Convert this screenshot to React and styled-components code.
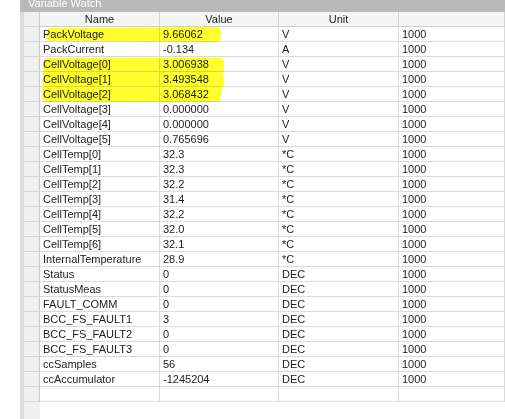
import React from "react";
import styled, { createGlobalStyle } from "styled-components";

const GlobalStyle = createGlobalStyle`
  html, body {
    margin: 0;
    padding: 0;
    background: #ffffff;
  }
  body {
    font-family: "Liberation Sans", Arial, sans-serif;
    font-size: 11px;
    color: #1c1c1c;
  }
`;

const rows = [
  ["PackVoltage", "9.66062", "V"],
  ["PackCurrent", "-0.134", "A"],
  ["CellVoltage[0]", "3.006938", "V"],
  ["CellVoltage[1]", "3.493548", "V"],
  ["CellVoltage[2]", "3.068432", "V"],
  ["CellVoltage[3]", "0.000000", "V"],
  ["CellVoltage[4]", "0.000000", "V"],
  ["CellVoltage[5]", "0.765696", "V"],
  ["CellTemp[0]", "32.3", "*C"],
  ["CellTemp[1]", "32.3", "*C"],
  ["CellTemp[2]", "32.2", "*C"],
  ["CellTemp[3]", "31.4", "*C"],
  ["CellTemp[4]", "32.2", "*C"],
  ["CellTemp[5]", "32.0", "*C"],
  ["CellTemp[6]", "32.1", "*C"],
  ["InternalTemperature", "28.9", "*C"],
  ["Status", "0", "DEC"],
  ["StatusMeas", "0", "DEC"],
  ["FAULT_COMM", "0", "DEC"],
  ["BCC_FS_FAULT1", "3", "DEC"],
  ["BCC_FS_FAULT2", "0", "DEC"],
  ["BCC_FS_FAULT3", "0", "DEC"],
  ["ccSamples", "56", "DEC"],
  ["ccAccumulator", "-1245204", "DEC"],
];

const Page = styled.div`
  position: relative;
  display: flex;
  width: 505px;
  height: 419px;
  overflow: hidden;
`;

const Margin = styled.div`
  width: 20px;
  flex: none;
`;

const Panel = styled.div`
  flex: 1;
  display: flex;
  flex-direction: column;
`;

const TitleBar = styled.div`
  height: 12px;
  flex: none;
  background: #b9b9b9;
  color: #ffffff;
  padding-left: 8px;
  font-size: 11px;
  line-height: 6px;
  overflow: hidden;
`;

const Body = styled.div`
  flex: 1;
  display: flex;
`;

const Strip = styled.div`
  width: 4px;
  flex: none;
  background: #dcdcdc;
`;

const Grid = styled.div`
  flex: 1;
  display: flex;
  flex-direction: column;
`;

const Row = styled.div`
  display: grid;
  grid-template-columns: 16px 120px 119px 120px 1fr;
  height: 15px;
  flex: none;
`;

const Cell = styled.div`
  box-sizing: border-box;
  height: 15px;
  line-height: 14px;
  padding-left: ${(p) => (p.$head ? 0 : 3)}px;
  text-align: ${(p) => (p.$head ? "center" : "left")};
  border-right: 1px solid ${(p) => (p.$head ? "#d2d2d2" : "#dadada")};
  border-bottom: 1px solid ${(p) => (p.$head ? "#cfcfcf" : "#dadada")};
  background: ${(p) => (p.$head ? "#f5f5f5" : "#ffffff")};
  white-space: nowrap;
  overflow: hidden;
`;

const RowHead = styled.div`
  box-sizing: border-box;
  height: 15px;
  background: #f0f0f0;
  border-right: 1px solid #c8c8c8;
  border-bottom: 1px solid #d4d4d4;
`;

const Filler = styled.div`
  flex: 1;
  display: grid;
  grid-template-columns: 16px 1fr;
`;

const FillerHead = styled.div`
  background: #f0f0f0;
`;

const Marker = styled.svg`
  position: absolute;
  left: 0;
  top: 0;
  pointer-events: none;
  mix-blend-mode: multiply;
`;

export default function App() {
  return (
    <>
      <GlobalStyle />
      <Page>
        <Margin />
        <Panel>
          <TitleBar>Variable Watch</TitleBar>
          <Body>
            <Strip />
            <Grid>
              <Row>
                <RowHead />
                <Cell $head>Name</Cell>
                <Cell $head>Value</Cell>
                <Cell $head>Unit</Cell>
                <Cell $head />
              </Row>
              {rows.map(([name, value, unit]) => (
                <Row key={name}>
                  <RowHead />
                  <Cell>{name}</Cell>
                  <Cell>{value}</Cell>
                  <Cell>{unit}</Cell>
                  <Cell>1000</Cell>
                </Row>
              ))}
              <Row>
                <RowHead />
                <Cell />
                <Cell />
                <Cell />
                <Cell />
              </Row>
              <Filler>
                <FillerHead />
                <div />
              </Filler>
            </Grid>
          </Body>
        </Panel>

        {/* highlighter strokes */}
        <Marker width="505" height="419">
          <path
            d="M48 30 Q47 28 52 28 L216 27 Q221 27 221 31 L221 39 Q221 42 216 42 L51 41 Q46 41 46 37 Z"
            fill="#ffff2e"
          />
          <path
            d="M44 60 Q43 58 48 58 L219 57.5 Q224 58 224 62 L224 71 Q223 73 221 74 L224 76 L224 85 Q224 88 221 88 L222 91 L220 100 Q219 102 214 102 L47 102 Q42 102 42 98 Z"
            fill="#ffff2e"
          />
        </Marker>
      </Page>
    </>
  );
}
